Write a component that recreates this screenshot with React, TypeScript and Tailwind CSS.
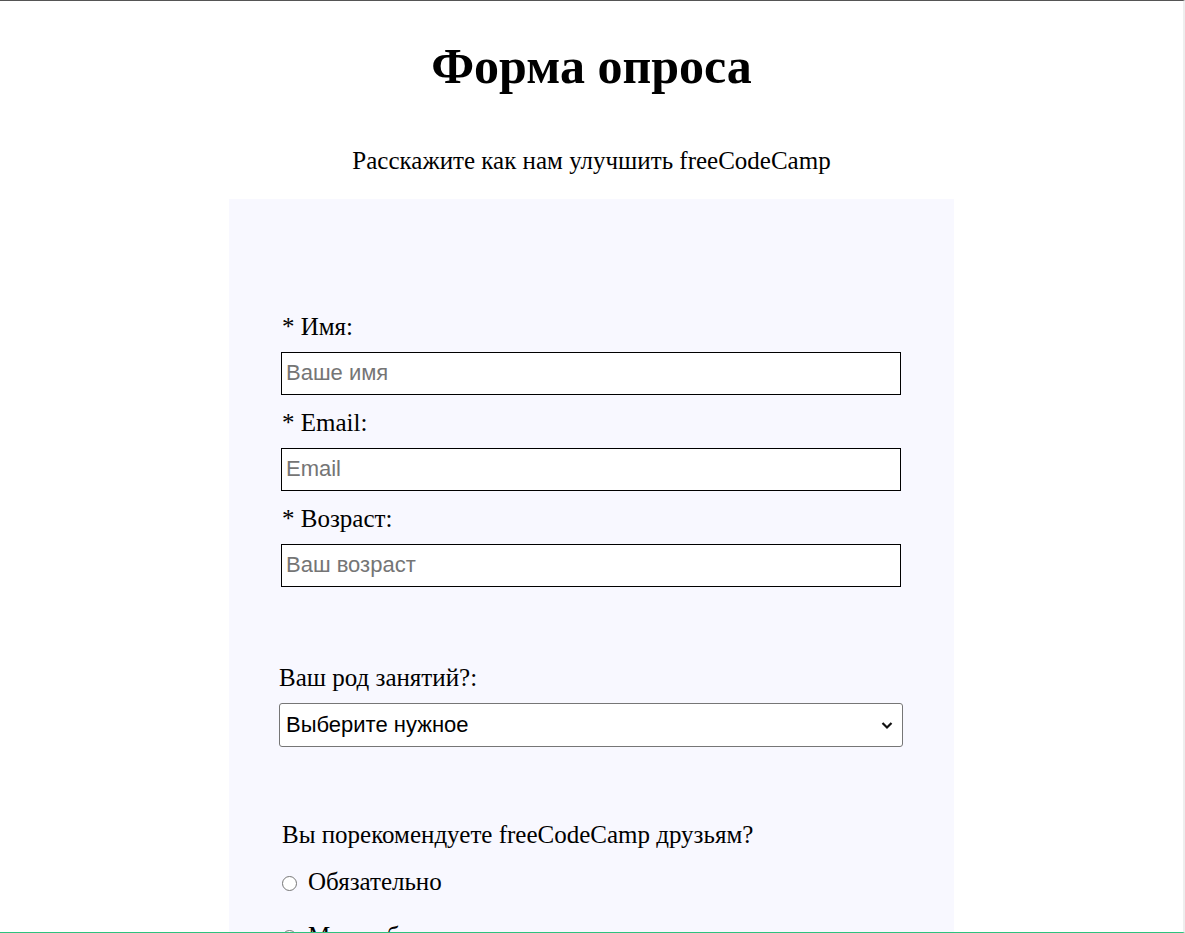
export default function App() {
  return (
    <div className="h-[933px] overflow-hidden bg-white border-t border-[#555] border-r-2 border-r-[#eee] border-b border-b-[#2ec27e] font-['Liberation_Serif',serif] text-black">
      <h1 className="pt-[37px] text-center text-[50px] font-bold leading-[1.15]">Форма опроса</h1>
      <p className="mt-[50px] text-center text-[25px] leading-[29px]">Расскажите как нам улучшить freeCodeCamp</p>
      <form className="mx-auto mt-[24px] w-[725px] bg-[#f8f8ff] pt-[113px] pb-10">
        <div className="pl-[52px]">
          {[
            ["* Имя:", "Ваше имя"],
            ["* Email:", "Email"],
            ["* Возраст:", "Ваш возраст"],
          ].map(([label, ph]) => (
            <div key={label} className="mb-[13px]">
              <label className="block text-[25px] leading-[29px] pl-px">{label}</label>
              <input
                placeholder={ph}
                className="mt-[11px] block h-[43px] w-[620px] border border-black bg-white px-[4px] font-['Liberation_Sans',sans-serif] text-[22px] placeholder:text-[#757575]"
              />
            </div>
          ))}
        </div>
        <div className="mt-[76px] pl-[50px]">
          <label className="block text-[25px] leading-[29px]">Ваш род занятий?:</label>
          <div className="relative mt-[11px] w-[624px]">
            <select className="block h-[44px] w-full appearance-none rounded-[3px] border border-[#767676] bg-white px-[6px] font-['Liberation_Sans',sans-serif] text-[22px]">
              <option>Выберите нужное</option>
            </select>
            <svg className="pointer-events-none absolute right-[10px] top-[18px]" width="12" height="9" viewBox="0 0 12 9">
              <path d="M1.5 2 L6 6.5 L10.5 2" fill="none" stroke="#111" strokeWidth="2.2" />
            </svg>
          </div>
        </div>
        <div className="mt-[73px] pl-[53px]">
          <p className="text-[25px] leading-[29px]">Вы порекомендуете freeCodeCamp друзьям?</p>
          {["Обязательно", "Может быть", "Нет"].map((t, i) => (
            <label
              key={t}
              className={
                i === 0
                  ? "mt-[18px] flex items-center gap-[11px] text-[25px] leading-[29px]"
                  : "mt-[25px] flex items-center gap-[11px] text-[25px] leading-[29px]"
              }
            >
              <span className="mt-[5px] inline-block h-[15px] w-[15px] rounded-full border border-[#767676] bg-white" />
              {t}
            </label>
          ))}
        </div>
      </form>
    </div>
  );
}
